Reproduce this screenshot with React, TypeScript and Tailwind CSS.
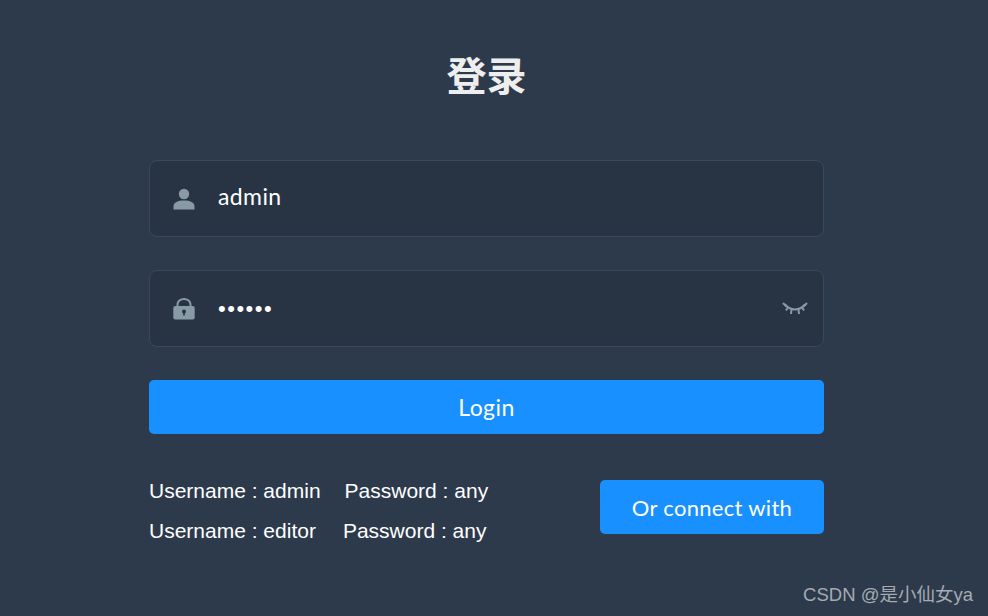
const cjk = "font-['Liberation_Sans','Noto_Sans_CJK_SC',sans-serif]";

function UserIcon() {
  return (
    <svg viewBox="0 0 22 22" className="h-[22px] w-[22px] text-[#889aa4]" fill="currentColor">
      <circle cx="11" cy="6" r="5.200" />
      <path d="M.5 21v-2.600C.5 14.600 5 12.600 11 12.600s10.500 2 10.500 5.800V21a.6.6 0 0 1-.6.6H1.100A.6.6 0 0 1 .5 21z" />
    </svg>
  );
}

function LockIcon() {
  return (
    <svg viewBox="0 0 22 22" className="h-[22px] w-[22px] text-[#889aa4]">
      <path d="M4.500 9V6.500a6.500 5.500 0 0 1 13 0V9" fill="none" stroke="currentColor" strokeWidth="2" />
      <rect x="0.300" y="8" width="21.400" height="13.500" rx="2" fill="currentColor" />
      <circle cx="11" cy="13.500" r="2" fill="#283443" />
      <rect x="10.200" y="13.500" width="1.600" height="4" fill="#283443" />
    </svg>
  );
}

function EyeOffIcon() {
  return (
    <svg viewBox="0 0 26 14" className="h-[14px] w-[26px] text-[#889aa4]" fill="none" stroke="currentColor" strokeWidth="2">
      <path d="M3 2.500C6.500 6.500 9.500 7.500 13 7.500s6.500-1 10-5" />
      <path d="M1 1l3.500 3.500M25 1l-3.500 3.500M5.500 6L4 8.500M20.500 6L22 8.500M9.500 7.500L9 12M16.500 7.500L17 12" />
    </svg>
  );
}

function Field({ icon, value, right }: { icon: React.ReactNode; value: React.ReactNode; right?: React.ReactNode }) {
  return (
    <div className="flex h-[77px] items-center rounded-[8px] border border-[#3b4858] bg-[#283443] pl-[23px] pr-[15px]">
      {icon}
      <div className="ml-[23px] flex-1 font-['Lato',sans-serif] text-[23px] tracking-[0.4px] text-white">{value}</div>
      {right}
    </div>
  );
}

export default function App() {
  return (
    <div className="relative h-[616px] w-[988px] overflow-hidden bg-[#2d3a4b]">
      <div className="ml-[149px] flex w-[675px] flex-col">
        <h1 className={`mt-[52px] h-[108px] text-center text-[40px] leading-[50px] font-bold text-[#eeeeee] ${cjk}`}>登录</h1>
        <Field icon={<UserIcon />} value={<span className="relative -top-[2px]">admin</span>} />
        <div className="mt-[33px]">
          <Field
            icon={<LockIcon />}
            value={<span className="relative -top-[1px] font-['Liberation_Sans',sans-serif] text-[22px] tracking-[1.500px]">••••••</span>}
            right={<EyeOffIcon />}
          />
        </div>
        <button className="mt-[33px] h-[54px] rounded-[5px] bg-[#1890ff] font-['Lato',sans-serif] text-[23px] tracking-[0.4px] text-white">
          Login
        </button>
        <div className="mt-[37px] flex items-start justify-between">
          <div className="font-['Liberation_Sans',sans-serif] text-[21px] leading-[40px] text-white">
            <div className="flex gap-[24px]">
              <span>Username : admin</span>
              <span>Password : any</span>
            </div>
            <div className="flex gap-[27px]">
              <span>Username : editor</span>
              <span>Password : any</span>
            </div>
          </div>
          <button className="mt-[9px] h-[54px] w-[224px] rounded-[5px] bg-[#1890ff] font-['Lato',sans-serif] text-[22px] tracking-[0.3px] text-white">
            Or connect with
          </button>
        </div>
      </div>
      <div className="absolute right-[15px] bottom-[8px] font-['Liberation_Sans','Noto_Sans_CJK_SC',sans-serif] text-[18.500px] leading-[26px] text-[#a4abb3]">
        CSDN @是小仙女ya
      </div>
    </div>
  );
}
